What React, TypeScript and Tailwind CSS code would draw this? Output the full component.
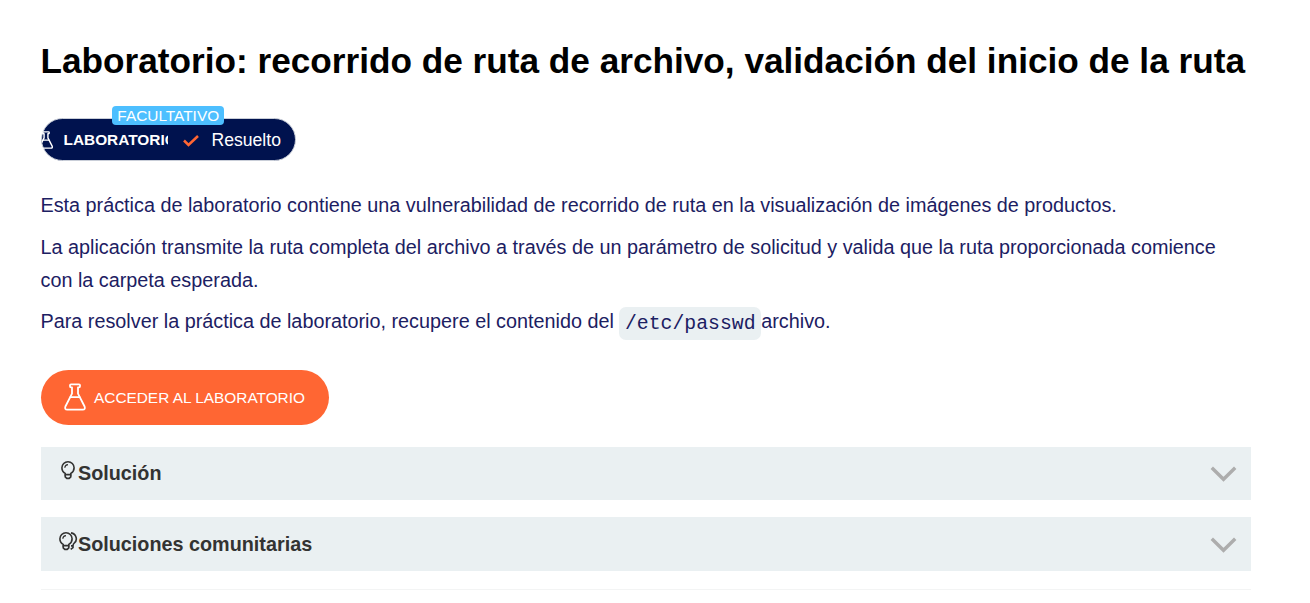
function Flask({ className, strokeWidth }: { className: string; strokeWidth: number }) {
  return (
    <svg className={className} viewBox="0 0 24 28" fill="none" stroke="currentColor" strokeWidth={strokeWidth} strokeLinejoin="round" strokeLinecap="round">
      <path d="M8 1.3h8q1 0 1 1v1q0 1-1 1h-1v6.4l6.6 12.8q1 3.2-1.8 3.2H4.2q-2.8 0-1.8-3.2L9 10.7V4.3H8q-1 0-1-1v-1q0-1 1-1z" />
      <path d="M7.4 14.2h9.2" />
    </svg>
  );
}

function Bulb({ double = false }: { double?: boolean }) {
  return (
    <svg className={double ? "h-5 w-5 shrink-0" : "h-5 w-4 shrink-0"} viewBox={double ? "0 0 20 20" : "0 0 16 20"} fill="none" stroke="#333332" strokeWidth="1.6">
      <path d="M5.2 14.6v-1.2C3.2 12.3 1.9 10.3 1.9 7.8a6.1 6.1 0 0 1 12.2 0c0 2.5-1.3 4.5-3.3 5.6v1.2z" />
      <path d="M5.2 14.4v2.5l1.6 1.5h2.4l1.6-1.5v-2.5" />
      <path d="M4.8 7.8A3.4 3.4 0 0 1 8 4.6" strokeWidth="1.2" />
      {double && <path d="M13 1.9c5.4.8 7 7.4 3.2 10.2-1.2.9-1.2 1.5-1.2 2.8h-2M15 14.4v2.3l-2.3 1.7" />}
    </svg>
  );
}

function Panel({ title, double = false, className }: { title: string; double?: boolean; className: string }) {
  return (
    <div className={`flex w-[1210px] items-center justify-between bg-[#eaf0f2] pr-[14px] ${className}`}>
      <div className="flex items-center">
        <div className="flex w-[37px] justify-end pb-[6px]">
          <div className={double ? "" : "pr-[2px]"}>
            <Bulb double={double} />
          </div>
        </div>
        <span className="text-[19.8px] leading-6 font-bold text-[#333332]">{title}</span>
      </div>
      <svg className="mt-[2px] h-4 w-[27px]" viewBox="0 0 27 16" fill="none" stroke="#adadad" strokeWidth="3.4">
        <path d="M1.8 1.8 13.5 13.3 25.2 1.8" />
      </svg>
    </div>
  );
}

export default function App() {
  return (
    <main className="h-[603px] overflow-hidden bg-white pl-[40.5px] font-['Liberation_Sans',sans-serif] text-[19.81px] text-[#1c2062]">
      <h1 className="pt-[38px] text-[35.2px] leading-[46px] font-bold whitespace-nowrap text-black">
        Laboratorio: recorrido de ruta de archivo, validación del inicio de la ruta
      </h1>
      <div className="relative mt-[34px] flex h-[43px] w-[255px] items-center rounded-full border border-[#c9ced8] bg-[#00124e] text-white">
        <div className="flex w-[126.5px] items-center overflow-hidden pt-px">
          <Flask className="-ml-[5px] h-[18px] w-[18px] shrink-0" strokeWidth={2.2} />
          <span className="ml-[9px] text-[15.4px] leading-5 font-bold">LABORATORIO</span>
        </div>
        <svg className="ml-[15px] mt-[2px] h-3 w-4" viewBox="0 0 16 12" fill="none" stroke="#ff6633" strokeWidth="2.5">
          <path d="M1 5.5 5.5 10 15 1" />
        </svg>
        <span className="ml-[12.5px] pt-px text-[17.6px] leading-5">Resuelto</span>
        <span className="absolute -top-[13px] left-[70.5px] flex h-[19px] w-[112px] items-center justify-center rounded-[4px] bg-[#4dbfff] text-[15.4px] leading-[19px]">
          <span className="pl-[0.5px]">FACULTATIVO</span>
        </span>
      </div>
      <p className="mt-[28px] leading-[33px]">
        Esta práctica de laboratorio contiene una vulnerabilidad de recorrido de ruta en la visualización de imágenes de productos.
      </p>
      <p className="mt-[9px] w-[1210px] leading-[33px]">
        La aplicación transmite la ruta completa del archivo a través de un parámetro de solicitud y valida que la ruta proporcionada comience con la carpeta esperada.
      </p>
      <p className="mt-[8px] flex h-[35px] whitespace-pre leading-[33px]">
        Para resolver la práctica de laboratorio, recupere el contenido del{" "}
        <code className="mt-[2px] h-[33px] rounded-[7px] bg-[#eaf0f2] px-[5.6px] font-['Liberation_Mono',monospace] leading-[34px]">/etc/passwd</code>
        archivo.
      </p>
      <div className="pl-[0.5px]">
        <button className="mt-[30px] flex h-[55px] w-[288px] items-center rounded-full bg-[#ff6633] pl-[22px] text-[15.4px] text-white">
          <Flask className="mb-[2px] h-7 w-6" strokeWidth={1.8} />
          <span className="ml-[7px]">ACCEDER AL LABORATORIO</span>
        </button>
        <Panel title="Solución" className="mt-[22px] h-[53px] pb-px" />
        <Panel title="Soluciones comunitarias" double className="mt-[17px] h-[54px]" />
        <div className="mt-[18px] h-px w-[1210px] bg-[#f3f4f4]" />
      </div>
    </main>
  );
}
